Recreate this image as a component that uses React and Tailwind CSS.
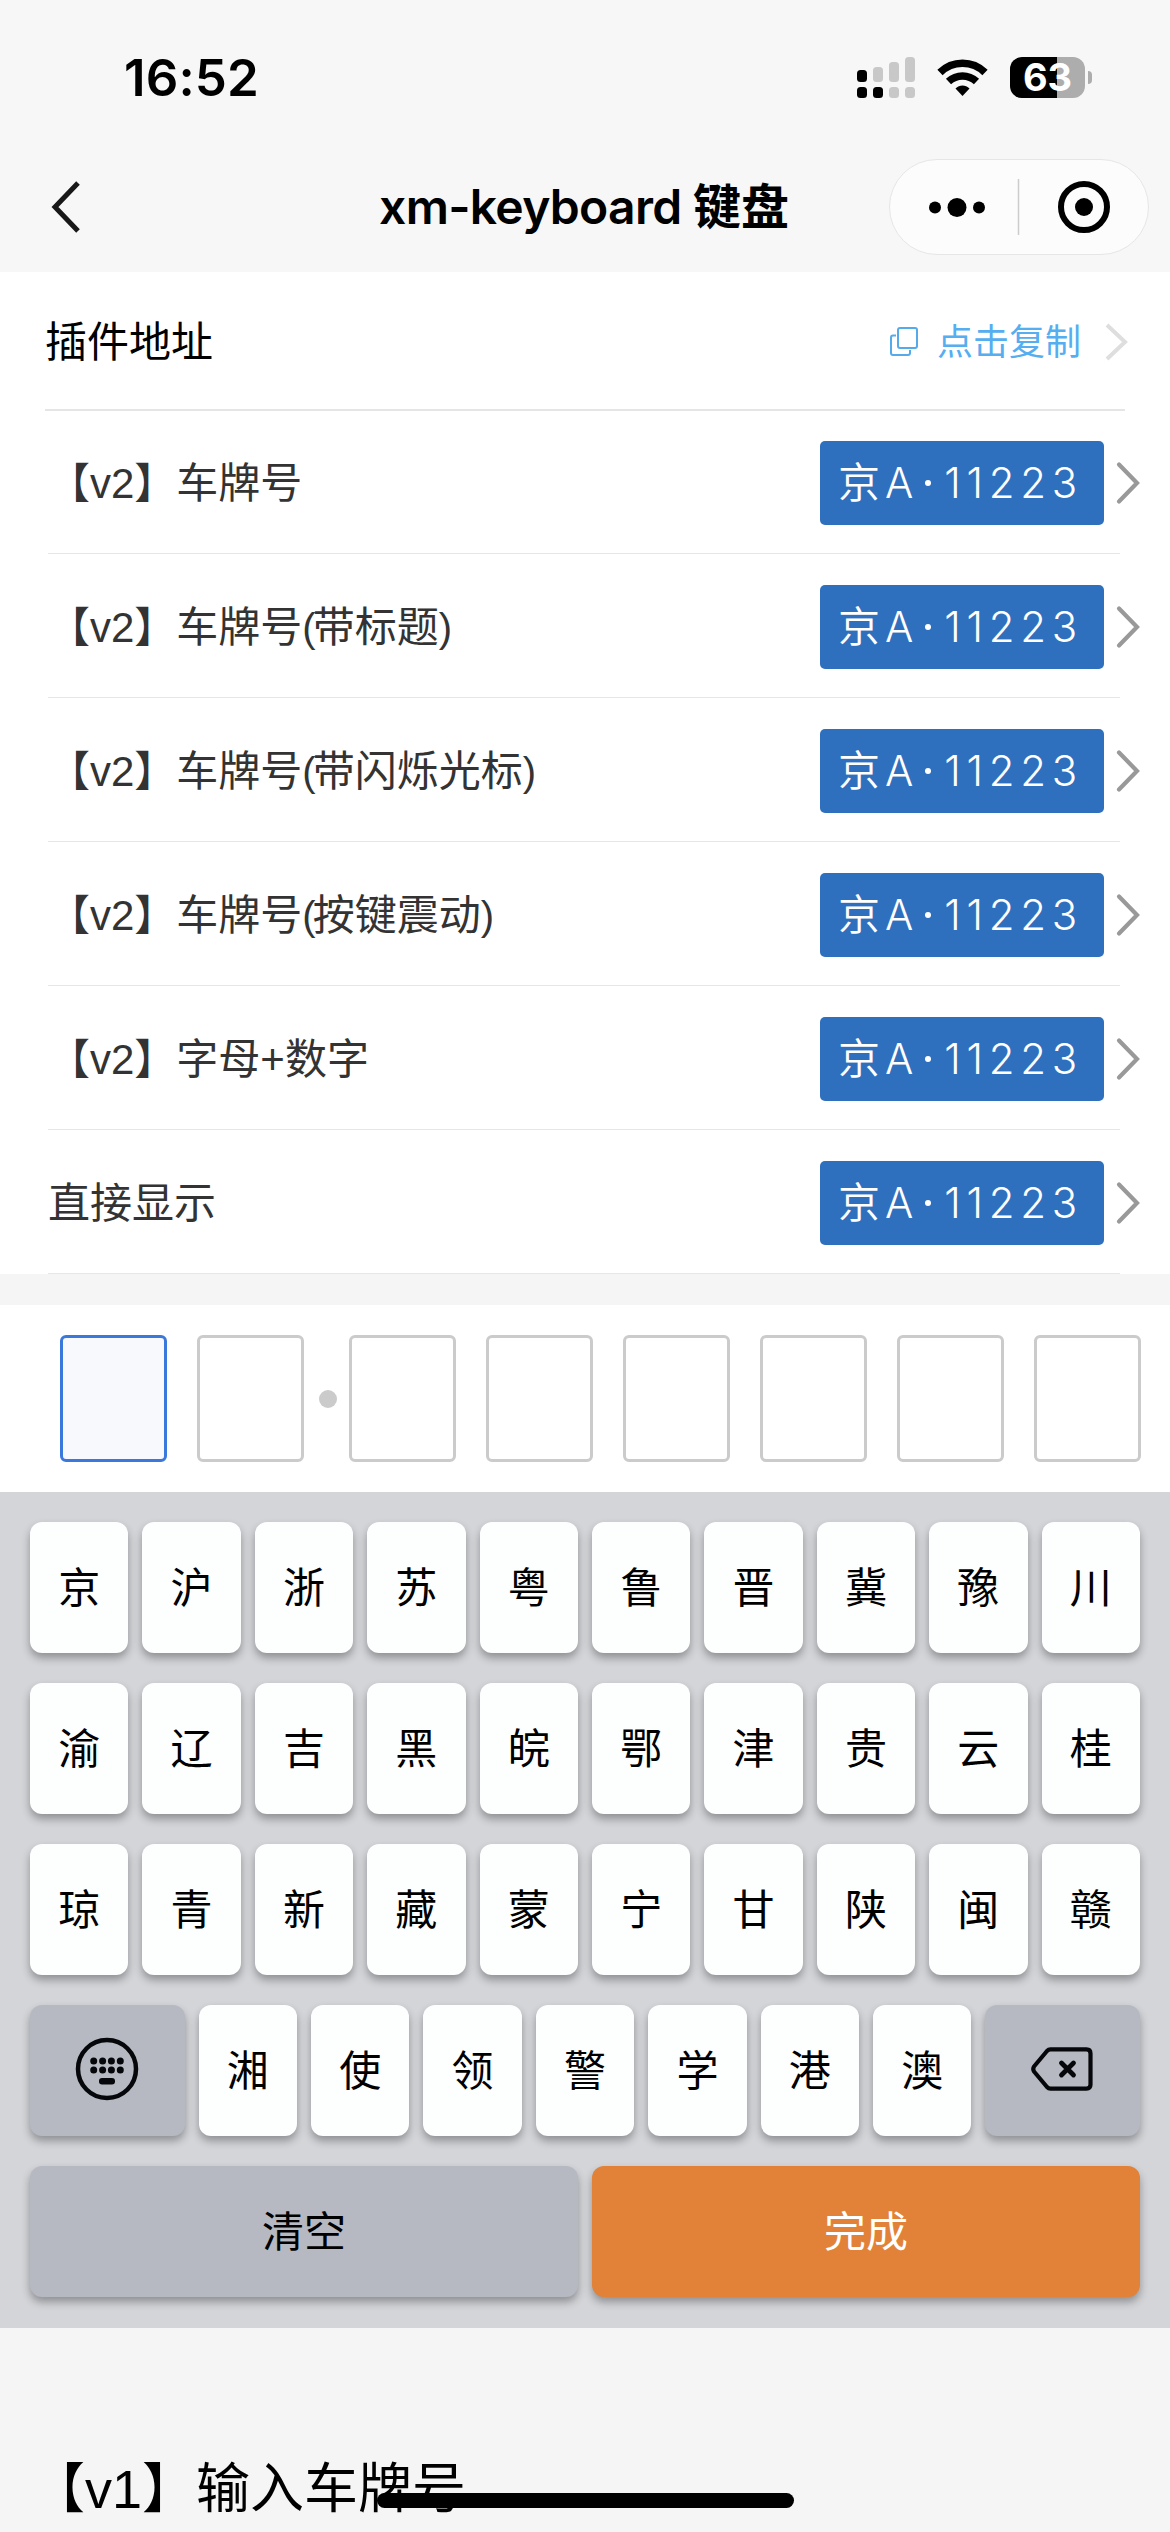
import React from "react";

const ROWS = [
  "【v2】车牌号",
  "【v2】车牌号(带标题)",
  "【v2】车牌号(带闪烁光标)",
  "【v2】车牌号(按键震动)",
  "【v2】字母+数字",
  "直接显示",
];

const KEY_ROWS = ["京沪浙苏粤鲁晋冀豫川", "渝辽吉黑皖鄂津贵云桂", "琼青新藏蒙宁甘陕闽赣"];

function StatusBar() {
  return (
    <div className="flex h-[159px] items-start justify-between pr-[78px] pl-[124px]">
      <span className="mt-[48px] text-[51px] leading-[60px] font-semibold tracking-[0.1px]">16:52</span>
      <div className="mt-[57px] flex h-[42px] items-start">
        <svg width="58" height="41" viewBox="0 0 58 41" fill="#c8c8c8">
          <rect x="0" y="13" width="10" height="12" rx="3.5" fill="#000" />
          <rect x="16" y="10" width="10" height="15" rx="3.5" />
          <rect x="32" y="5" width="10" height="20" rx="3.5" />
          <rect x="48" y="0" width="10" height="25" rx="3.5" />
          <rect x="0" y="30" width="10" height="11" rx="3.5" fill="#000" />
          <rect x="16" y="30" width="10" height="11" rx="3.5" fill="#000" />
          <rect x="32" y="30" width="10" height="11" rx="3.5" />
          <rect x="48" y="30" width="10" height="11" rx="3.5" />
        </svg>
        <svg className="mt-[2px] ml-[22px]" width="51" height="38" viewBox="0 0 51 38" fill="none" stroke="#000">
          <path d="M3 13.5C15.500 1.200 35.500 1.200 48 13.500" strokeWidth="7.500" />
          <path d="M11.500 22.500C19.500 15 31.500 15 39.500 22.500" strokeWidth="7.500" />
          <path d="M18.500 29.500C22.500 25.500 28.500 25.500 32.500 29.500L25.500 37Z" fill="#000" stroke="none" />
        </svg>
        <div className="ml-[22px] flex items-center">
          <div className="flex h-[41px] w-[75px] items-center justify-center rounded-[12px] bg-[linear-gradient(90deg,#000_47px,#adadad_47px)]">
            <span className="text-[38px] leading-[41px] font-bold text-white">63</span>
          </div>
          <div className="ml-[3px] h-[13px] w-[4px] rounded-r-full bg-[#adadad]" />
        </div>
      </div>
    </div>
  );
}

function NavBar() {
  return (
    <div className="grid h-[113px] grid-cols-[1fr_auto_1fr] items-start px-[21px]">
      <svg className="mt-[21px] ml-[30px]" width="30" height="54" viewBox="0 0 30 54" fill="none" stroke="#181818" strokeWidth="5">
        <path d="M27 3L4 27L27 51" />
      </svg>
      <h1 className="mt-[18px] mr-[2px] text-[48px] leading-[60px] font-semibold">
        <span className="tracking-[-0.7px]">xm-keyboard </span>键盘
      </h1>
      <div className="flex h-[96px] w-[260px] items-center justify-self-end rounded-full border border-[#e6e6e6] bg-[#fcfcfc]">
        <svg width="258" height="94" viewBox="0 0 258 94">
          <circle cx="45" cy="47.500" r="6" />
          <circle cx="67" cy="47.500" r="9.500" />
          <circle cx="89" cy="47.500" r="6" />
          <path d="M128.500 19V75" stroke="#ccc" strokeWidth="1.500" />
          <circle cx="194" cy="47" r="23" fill="none" stroke="#000" strokeWidth="6" />
          <circle cx="194" cy="47" r="9" />
        </svg>
      </div>
    </div>
  );
}

function Plate() {
  return (
    <div className="flex h-[84px] w-[284px] items-center rounded-[5px] bg-[#2f70be] pl-[18px] text-[42px] leading-[60px] font-[350] tracking-[5px] text-white">
      <span>京A</span>
      <span className="mr-[13px] ml-[7px] size-[6px] rounded-full bg-white" />
      <span className="tracking-[5.7px]">11223</span>
    </div>
  );
}

function RowLabel({ text }) {
  return (
    <span className="font-['Liberation_Sans','Noto_Sans_CJK_SC',sans-serif] text-[42px] leading-[60px] text-[#333]">
      {text.split(/([()])/).map((part, i) =>
        part === "(" || part === ")" ? (
          <span key={i} className="text-[40px] tracking-[-3px]">
            {part}
          </span>
        ) : (
          part
        )
      )}
    </span>
  );
}

function Key({ children, className = "w-[98.4px] bg-[#fdfefe]" }) {
  return (
    <div
      className={
        "flex h-[131px] items-center justify-center rounded-[12px] text-[42px] shadow-[0_5px_8px_rgba(0,0,0,0.32)] " +
        className
      }
    >
      {children}
    </div>
  );
}

function Keyboard() {
  return (
    <div className="flex h-[836px] flex-col gap-[30px] bg-[#d3d5d9] px-[30px] pt-[30px]">
      {KEY_ROWS.map((row) => (
        <div key={row} className="flex gap-[14px]">
          {[...row].map((c) => (
            <Key key={c}>{c}</Key>
          ))}
        </div>
      ))}
      <div className="flex gap-[14px]">
        <Key className="flex-1 bg-[#b6b9c2]">
          <svg className="mb-[3px]" width="64" height="64" viewBox="0 0 64 64" fill="#05070a">
            <circle cx="32" cy="32" r="29" fill="none" stroke="#05070a" strokeWidth="4.500" />
            {[24, 33].map((y) =>
              [18.700, 27.600, 36.400, 45.300].map((x) => <circle key={`${x}-${y}`} cx={x} cy={y} r="3.500" />)
            )}
            <rect x="24" y="41" width="16" height="6.500" rx="3" />
          </svg>
        </Key>
        {[..."湘使领警学港澳"].map((c) => (
          <Key key={c}>{c}</Key>
        ))}
        <Key className="flex-1 bg-[#b6b9c2]">
          <svg
            className="mr-[2px] mb-[3px]"
            width="64"
            height="46"
            viewBox="0 0 64 46"
            fill="none"
            stroke="#05070a"
            strokeWidth="4.200"
            strokeLinecap="round"
            strokeLinejoin="round"
          >
            <path d="M20.500 3.400H56.500Q60.500 3.400 60.500 7.400V38.600Q60.500 42.600 56.500 42.600H20.500Q18.500 42.600 17 41L4 25.500Q2.500 23 4 20.500L17 5Q18.500 3.400 20.500 3.400Z" />
            <path d="M31.500 17L43.500 29M43.500 17L31.500 29" strokeWidth="4.800" />
          </svg>
        </Key>
      </div>
      <div className="flex gap-[14px]">
        <Key className="flex-1 bg-[#b6b9c2]">清空</Key>
        <Key className="flex-1 bg-[#e28238] text-white">完成</Key>
      </div>
    </div>
  );
}

function PlateCell({ active }) {
  return (
    <div
      className={
        active
          ? "h-[127px] w-[107px] rounded-[6px] border-[3px] border-[#3a78dc] bg-[#f7f9fd]"
          : "h-[127px] w-[107px] rounded-[6px] border-[3px] border-[#cbcbcb]"
      }
    />
  );
}

export default function App() {
  return (
    <div className="relative flex h-[2532px] w-[1170px] flex-col overflow-hidden bg-[#f5f5f5] font-[Inter,'Noto_Sans_CJK_SC',sans-serif] text-black">
      <header className="h-[272px] bg-[#f7f7f7]">
        <StatusBar />
        <NavBar />
      </header>

      <section className="h-[1002px] bg-white">
        <div className="mx-[45px] mb-[-1px] flex h-[139px] items-center border-b-[2px] border-[#e5e5e5] pt-[2px]">
          <span className="flex-1 text-[42px] leading-[60px]">插件地址</span>
          <svg width="30" height="31" viewBox="0 0 30 31" fill="none" stroke="#55aaea" strokeWidth="2">
            <rect x="9" y="2" width="19" height="20" rx="2" />
            <path d="M7 9.500H4Q2 9.500 2 11.500V27Q2 29 4 29H19Q21 29 21 27V24" />
          </svg>
          <span className="ml-[18px] text-[36px] leading-[60px] text-[#55aeef]">点击复制</span>
          <svg className="mr-[-4px] ml-[24px]" width="24" height="38" viewBox="0 0 24 38" fill="none" stroke="#dedede" strokeWidth="4">
            <path d="M2 2L20 19L2 36" />
          </svg>
        </div>
        {ROWS.map((label) => (
          <div key={label} className="flex h-[144px] items-center pr-[30px] pl-[48px]">
            <div className="mr-[-300px] flex h-full w-[1072px] items-center border-b border-[#e6e6e6] pt-[5px]">
              <RowLabel text={label} />
            </div>
            <div className="ml-auto flex items-center pt-[2px]">
              <Plate />
              <svg className="ml-[12px]" width="24" height="44" viewBox="0 0 24 44" fill="none" stroke="#999" strokeWidth="4.200" strokeLinecap="round">
                <path d="M3 3.500L21 22L3 40.500" />
              </svg>
            </div>
          </div>
        ))}
      </section>

      <section className="mt-[31px] flex h-[187px] items-center gap-[30px] bg-white pl-[60px]">
        <PlateCell active />
        <PlateCell />
        <div className="mr-[-18px] ml-[-15px] size-[18px] shrink-0 rounded-full bg-[#cbcbcb]" />
        {[2, 3, 4, 5, 6, 7].map((i) => (
          <PlateCell key={i} />
        ))}
      </section>

      <Keyboard />

      <h2 className="mt-[121px] ml-[31px] font-['Liberation_Sans','Noto_Sans_CJK_SC',sans-serif] text-[54px] leading-[80px]">
        【v1】输入车牌号
      </h2>
      <div className="absolute bottom-[24px] left-[377px] h-[15px] w-[417px] rounded-full bg-black" />
    </div>
  );
}
